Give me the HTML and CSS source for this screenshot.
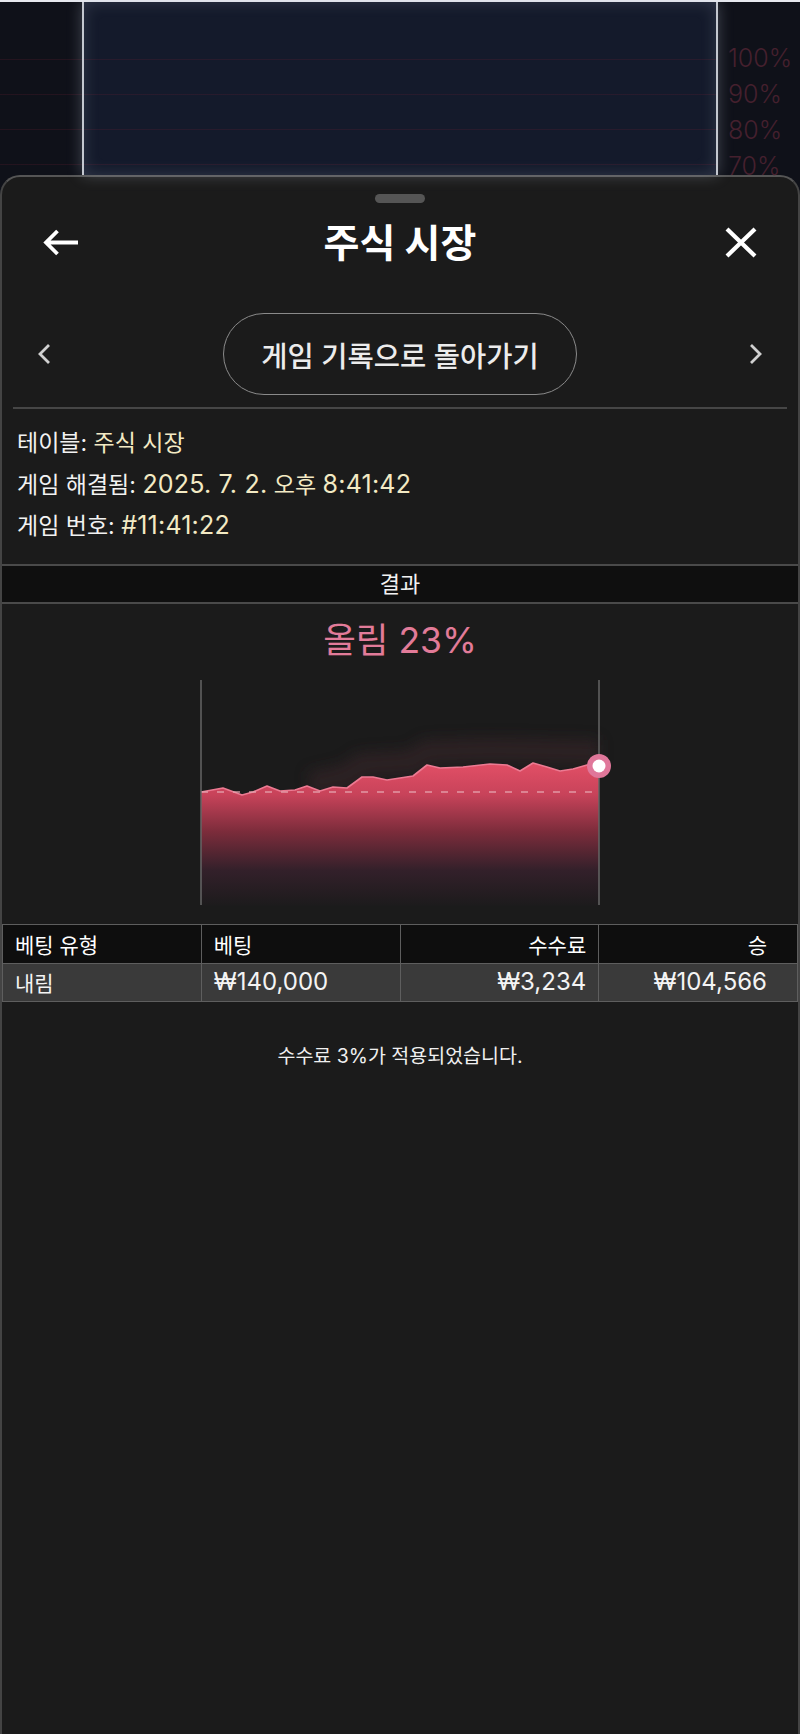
FILE: index.html
```html
<!DOCTYPE html>
<html lang="ko">
<head>
<meta charset="utf-8">
<title>주식 시장</title>
<link rel="stylesheet" href="styles.css">
</head>
<body>
<div class="scene">
  <div class="scene-side scene-grid"></div>
  <div class="scene-panel scene-grid"></div>
  <div class="scene-side scene-labels">
    <span>100%</span>
    <span>90%</span>
    <span>80%</span>
    <span>70%</span>
  </div>
</div>
<div class="sheet">
  <div class="handle"></div>
  <header class="sheet-head">
    <span class="icon icon-back">
      <svg width="36" height="29" viewBox="0 0 36 29"><path d="M35 14.5 H3.5 M14.5 3 L3 14.5 L14.5 26" fill="none" stroke="#fff" stroke-width="3.8"/></svg>
    </span>
    <h1 class="title">주식 시장</h1>
    <span class="icon icon-close">
      <svg width="32" height="31" viewBox="0 0 32 31"><path d="M2 2 L30 29 M30 2 L2 29" fill="none" stroke="#fff" stroke-width="4.2"/></svg>
    </span>
  </header>
  <div class="nav-row">
    <span class="chev chev-left">
      <svg width="14" height="22" viewBox="0 0 14 22"><path d="M12 2 L3 11 L12 20" fill="none" stroke="#d0d0d0" stroke-width="2.8"/></svg>
    </span>
    <button class="pill">게임 기록으로 돌아가기</button>
    <span class="chev chev-right">
      <svg width="14" height="22" viewBox="0 0 14 22"><path d="M2 2 L11 11 L2 20" fill="none" stroke="#d0d0d0" stroke-width="2.8"/></svg>
    </span>
  </div>
  <div class="sep"></div>
  <div class="info">
    <p>테이블: <span class="val">주식 시장</span></p>
    <p>게임 해결됨: <span class="val"><span class="digits">2025. 7. 2.</span> 오후 <span class="digits">8:41:42</span></span></p>
    <p>게임 번호: <span class="val"><span class="digits">#11:41:22</span></span></p>
  </div>
  <div class="result-bar">결과</div>
  <div class="outcome">올림 23%</div>
  <div class="chart">
    <svg width="400" height="226" viewBox="0 0 400 226">
      <defs>
        <linearGradient id="fillGrad" gradientUnits="userSpaceOnUse" x1="0" y1="83" x2="0" y2="226">
          <stop offset="0" stop-color="#e24f66"/>
          <stop offset="0.22" stop-color="#c8435a"/>
          <stop offset="0.48" stop-color="#7c2c3b"/>
          <stop offset="0.75" stop-color="#33202a"/>
          <stop offset="1" stop-color="#1c1b1c"/>
        </linearGradient>
        <filter id="glow" x="-20%" y="-100%" width="140%" height="300%">
          <feGaussianBlur stdDeviation="7"/>
        </filter>
      </defs>
      <polyline points="110,104 147,96 162,85 213,82 227,72 290,70 399,72" fill="none" stroke="#3a262c" stroke-width="24" opacity="0.55" filter="url(#glow)"/>
      <polygon points="1,112 23,108 42,115 53,112 67,106 80,111 95,110 107,106 120,111 133,107 147,108 162,97 173,97 187,100 213,96 227,85 240,88 263,87 290,84 307,85 320,91 333,83 347,87 360,91 373,89 387,85 399,86 399,226 1,226" fill="url(#fillGrad)"/>
      <polyline points="1,112 23,108 42,115 53,112 67,106 80,111 95,110 107,106 120,111 133,107 147,108 162,97 173,97 187,100 213,96 227,85 240,88 263,87 290,84 307,85 320,91 333,83 347,87 360,91 373,89 387,85 399,86" fill="none" stroke="#ec7a92" stroke-width="1.6" stroke-linejoin="round"/>
      <line x1="1" y1="112" x2="399" y2="112" stroke="#e8a8b2" stroke-width="1.6" stroke-dasharray="7 9" opacity="0.85"/>
      <line x1="1" y1="0" x2="1" y2="225" stroke="#666" stroke-width="1.5"/>
      <line x1="399" y1="0" x2="399" y2="225" stroke="#666" stroke-width="1.5"/>
      <circle cx="399" cy="86" r="12" fill="#e0779a"/>
      <circle cx="399" cy="86" r="6.5" fill="#fff"/>
    </svg>
  </div>
  <table class="bets">
    <thead>
      <tr><th>베팅 유형</th><th>베팅</th><th class="num">수수료</th><th class="num last">승</th></tr>
    </thead>
    <tbody>
      <tr><td>내림</td><td><span class="digits">₩140,000</span></td><td class="num"><span class="digits">₩3,234</span></td><td class="num last"><span class="digits">₩104,566</span></td></tr>
    </tbody>
  </table>
  <p class="note">수수료 3%가 적용되었습니다.</p>
</div>
</body>
</html>
```

FILE: styles.css
```css
* { box-sizing: border-box; }

html, body {
  margin: 0;
  padding: 0;
}

body {
  width: 800px;
  min-height: 1734px;
  background: #0f1119;
  font-family: Inter, "Noto Sans CJK KR", sans-serif;
  color: #f2f2f2;
}

/* background scene */
.scene {
  height: 175px;
  display: flex;
  border-top: 2px solid #e6e8ee;
  background: #0f1119;
}

.scene-grid {
  background-image: repeating-linear-gradient(to bottom, rgba(110, 30, 50, 0.22) 0 1px, transparent 1px 35px);
  background-position: 0 57px;
  background-repeat: no-repeat;
}

.scene-side {
  width: 82px;
  flex: none;
}

.scene-panel {
  flex: 1;
  background-color: #141a2b;
  border-left: 2px solid #c4c8d0;
  border-right: 2px solid #c4c8d0;
  box-shadow: 0 0 14px rgba(190, 200, 220, 0.3), inset 0 0 16px rgba(190, 200, 220, 0.18);
}

.scene-labels {
  display: flex;
  flex-direction: column;
  padding: 38px 0 0 10px;
  font-size: 25px;
  font-weight: 300;
  line-height: 36px;
  color: #45202e;
}

/* sheet */
.sheet {
  min-height: 1559px;
  background: #1b1b1b;
  border: 2px solid #444;
  border-top-color: #555;
  border-bottom: 0;
  border-radius: 20px 20px 0 0;
  padding-top: 17px;
  display: flex;
  flex-direction: column;
}

.handle {
  align-self: center;
  width: 50px;
  height: 9px;
  border-radius: 5px;
  background: #555;
}

.sheet-head {
  height: 79px;
  display: grid;
  grid-template-columns: 1fr auto 1fr;
  align-items: center;
  padding: 0 41px;
}

.icon {
  display: flex;
}

.icon-back { justify-self: start; }
.icon-close { justify-self: end; }

.title {
  margin: 0;
  font-size: 39px;
  font-weight: 700;
  color: #fff;
  line-height: 1;
}

.nav-row {
  margin-top: 31px;
  display: grid;
  grid-template-columns: 1fr auto 1fr;
  align-items: center;
  padding: 0 35px;
}

.chev { display: flex; }
.chev-left { justify-self: start; }
.chev-right { justify-self: end; }

.pill {
  height: 82px;
  padding: 0 37px;
  border: 1.5px solid #8a8a8a;
  border-radius: 41px;
  background: transparent;
  color: #ececec;
  font-family: Inter, "Noto Sans CJK KR", sans-serif;
  font-size: 28.5px;
  font-weight: 500;
}

.sep {
  margin: 12px 11px 0;
  height: 2px;
  background: #464646;
}

.info {
  padding: 14px 15px 16px;
}

.info p {
  margin: 0;
  height: 41.5px;
  font-size: 23px;
  line-height: 41.5px;
  color: #f2f2f2;
}

.info .val {
  color: #f3eac4;
}

.info .digits {
  font-size: 25px;
  line-height: 0;
  letter-spacing: 0.2px;
}

.result-bar {
  border-top: 2px solid #4a4a4a;
  border-bottom: 2px solid #4a4a4a;
  background: #0f0f0f;
  height: 40px;
  line-height: 36px;
  text-align: center;
  font-size: 22px;
  color: #f2f2f2;
}

.outcome {
  margin-top: 12px;
  line-height: 50px;
  text-align: center;
  font-size: 35.5px;
  color: #e27b99;
}

.chart {
  margin-top: 14px;
  align-self: center;
  width: 400px;
  height: 226px;
}

.chart svg {
  display: block;
  overflow: visible;
}

.bets {
  margin-top: 18px;
  width: 100%;
  border-collapse: collapse;
  table-layout: fixed;
  font-size: 21px;
}

.bets th,
.bets td {
  border: 1.5px solid #5e5e5e;
  padding: 0 12px;
  text-align: left;
  font-weight: 400;
  white-space: nowrap;
}

.bets th {
  height: 39px;
  background: #0e0e0e;
  color: #fff;
}

.bets td {
  height: 38px;
  background: #3a3a3a;
  color: #f4f4f4;
}

.bets .digits {
  font-size: 24px;
  line-height: 0;
}

.bets .num { text-align: right; }
.bets .last { padding-right: 30px; }

.note {
  margin: 42px 0 0;
  line-height: 24px;
  text-align: center;
  font-size: 19.5px;
  color: #f0f0f0;
}
```
